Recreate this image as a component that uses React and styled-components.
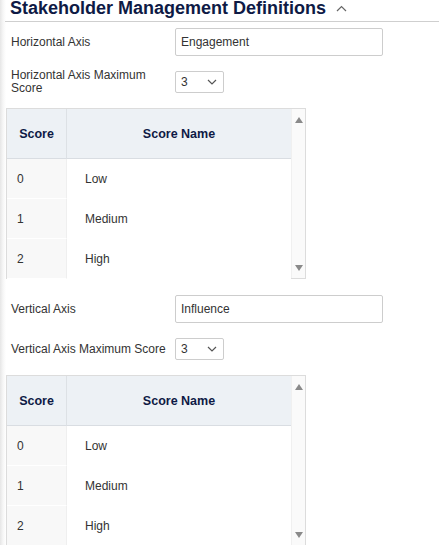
import React from 'react'
import styled, { createGlobalStyle } from 'styled-components'

const GlobalStyle = createGlobalStyle`
  html, body {
    margin: 0;
    padding: 0;
    background: #fff;
    overflow: hidden;
  }
  body {
    font-family: "Liberation Sans", Arial, sans-serif;
  }
`

const Page = styled.div`
  width: 439px;
  height: 545px;
  overflow: hidden;
  background: linear-gradient(to right, #e6e6e6 0px, #f6f6f6 3px, #fff 6px);
`

const Header = styled.div`
  display: flex;
  align-items: flex-start;
  gap: 10px;
  margin-left: 5px;
  padding-left: 5px;
  height: 22px;
  border-bottom: 1px solid #cfcfcf;
  box-sizing: border-box;

  h2 {
    margin: 1px 0 0;
    font-size: 18px;
    line-height: 14px;
    font-weight: 700;
    color: #0e1a45;
  }
`

const Chevron = styled.svg`
  margin-top: 5px;
`

const Body = styled.div`
  padding: 6px 0 0 11px;
  display: flex;
  flex-direction: column;
`

const Row = styled.div`
  display: grid;
  grid-template-columns: 164px auto;
  align-items: center;
  margin-bottom: 15px;

  label {
    font-size: 12px;
    line-height: 13px;
    color: #333;
    padding-right: 6px;
    margin: -2px 0;
  }
`

const TextInput = styled.div`
  width: 208px;
  height: 28px;
  box-sizing: border-box;
  border: 1px solid #cdcdcd;
  border-radius: 2px;
  padding: 0 5px;
  display: flex;
  align-items: center;
  font-size: 12px;
  color: #333;
`

const Select = styled.div`
  width: 49px;
  height: 22px;
  box-sizing: border-box;
  border: 1px solid #cdcdcd;
  border-radius: 2px;
  padding: 0 6px 0 5px;
  display: flex;
  align-items: center;
  justify-content: space-between;
  font-size: 12px;
  color: #333;
`

const TableWrap = styled.div`
  width: 300px;
  height: 171px;
  margin-left: -5px;
  margin-bottom: ${p => p.$gap || 16}px;
  box-sizing: border-box;
  border: 1px solid #dcdcdc;
  display: flex;
  flex-shrink: 0;
`

const Grid = styled.div`
  width: 284px;
  display: grid;
  grid-template-columns: 60px 1fr;
  grid-auto-rows: 40px;
  grid-template-rows: 50px;
`

const HeadCell = styled.div`
  background: #edf1f5;
  border-bottom: 1px solid #d9dde2;
  border-right: ${p => (p.$first ? '1px solid #dde1e5' : 'none')};
  display: flex;
  align-items: center;
  justify-content: center;
  font-size: 12.5px;
  font-weight: 700;
  color: #0e1a45;
`

const Cell = styled.div`
  display: flex;
  align-items: center;
  font-size: 12px;
  color: #333;
  padding-left: ${p => (p.$first ? 10 : 18)}px;
  background: ${p => (p.$first ? '#f8f8f8' : '#fff')};
  border-right: ${p => (p.$first ? '1px solid #efefef' : 'none')};
  border-bottom: 1px solid #fff;
`

const Scroll = styled.div`
  flex: 1;
  background: #fafafa;
  border-left: 1px solid #f0f0f0;
  display: flex;
  flex-direction: column;
  justify-content: space-between;
  align-items: center;
  padding: 8px 0 7px;
`

const Arrow = styled.span`
  width: 0;
  height: 0;
  border-left: 4px solid transparent;
  border-right: 4px solid transparent;
  ${p => (p.$up ? 'border-bottom: 6px solid #8a8a8a;' : 'border-top: 6px solid #8a8a8a;')}
`

const ChevronDown = () => (
  <svg width="10" height="6" viewBox="0 0 10 6">
    <path d="M1 1 L5 5 L9 1" fill="none" stroke="#555" strokeWidth="1.2" />
  </svg>
)

const scores = [
  ['0', 'Low'],
  ['1', 'Medium'],
  ['2', 'High'],
]

const ScoreTable = ({ gap }) => (
  <TableWrap $gap={gap}>
    <Grid>
      <HeadCell $first>Score</HeadCell>
      <HeadCell>Score Name</HeadCell>
      {scores.map(([s, n]) => (
        <React.Fragment key={s}>
          <Cell $first>{s}</Cell>
          <Cell>{n}</Cell>
        </React.Fragment>
      ))}
    </Grid>
    <Scroll>
      <Arrow $up />
      <Arrow />
    </Scroll>
  </TableWrap>
)

export default function App() {
  return (
    <Page>
      <GlobalStyle />
      <Header>
        <h2>Stakeholder Management Definitions</h2>
        <Chevron width="11" height="7" viewBox="0 0 11 7">
          <path d="M1 6 L5.5 1.5 L10 6" fill="none" stroke="#666" strokeWidth="1.2" />
        </Chevron>
      </Header>
      <Body>
        <Row>
          <label>Horizontal Axis</label>
          <TextInput>Engagement</TextInput>
        </Row>
        <Row>
          <label>Horizontal Axis Maximum Score</label>
          <Select>
            3
            <ChevronDown />
          </Select>
        </Row>
        <ScoreTable gap={16} />
        <Row>
          <label>Vertical Axis</label>
          <TextInput>Influence</TextInput>
        </Row>
        <Row>
          <label>Vertical Axis Maximum Score</label>
          <Select>
            3
            <ChevronDown />
          </Select>
        </Row>
        <ScoreTable gap={0} />
      </Body>
    </Page>
  )
}
